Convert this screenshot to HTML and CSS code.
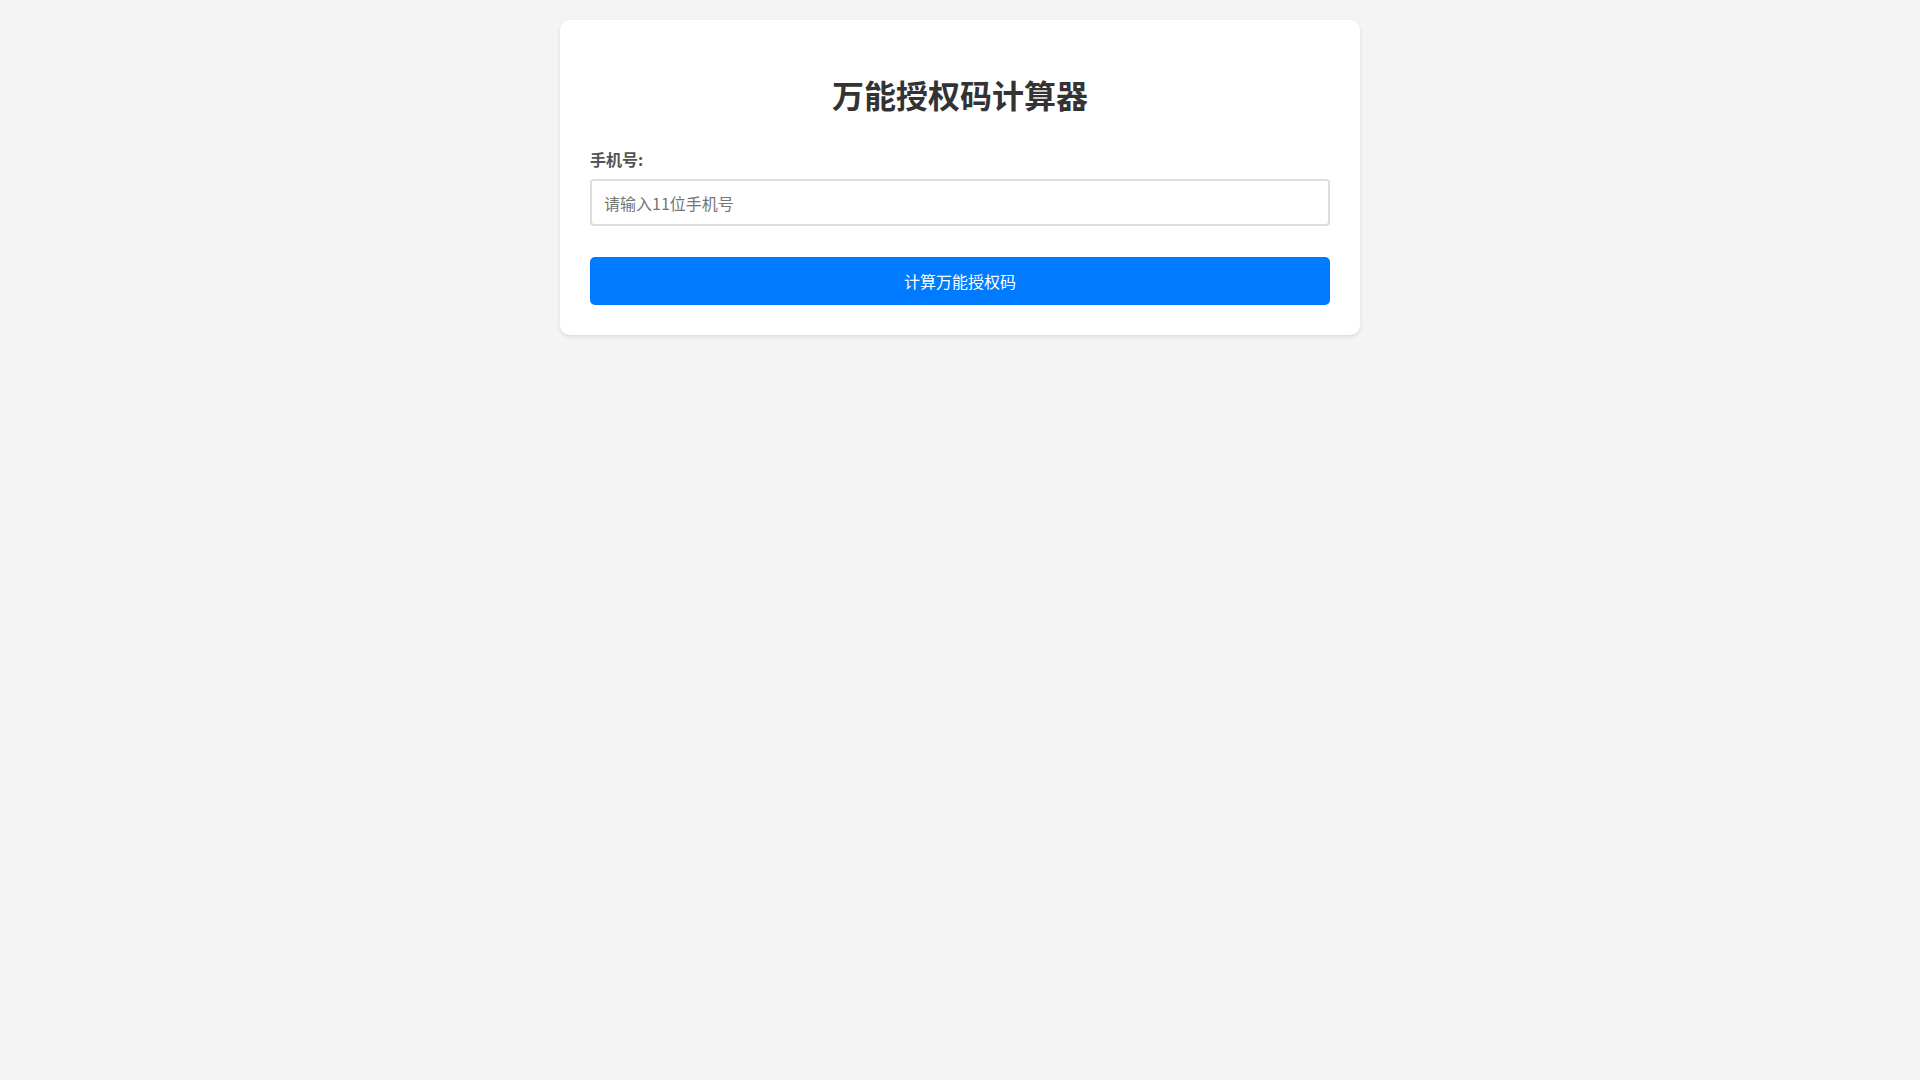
FILE: index.html
```html
<!DOCTYPE html>
<html lang="zh-CN">
<head>
<meta charset="utf-8">
<title>万能授权码计算器</title>
<link rel="stylesheet" href="styles.css">
</head>
<body>
<div class="container">
  <h1 class="title">万能授权码计算器</h1>
  <div class="form-group">
    <label class="label" for="phone">手机号:</label>
    <input class="input" id="phone" type="text" placeholder="请输入11位手机号">
  </div>
  <button class="btn" type="button">计算万能授权码</button>
</div>
</body>
</html>
```

FILE: styles.css
```css
* {
  box-sizing: border-box;
}

body {
  margin: 0;
  background: #f4f4f4;
  font-family: "Noto Sans CJK SC", "Noto Sans", sans-serif;
  color: #333;
}

.container {
  width: 800px;
  margin: 20px auto;
  background: #fff;
  padding: 30px;
  border-radius: 10px;
  box-shadow: 0 2px 4px rgba(0, 0, 0, 0.1);
}

.title {
  font-size: 32px;
  font-weight: bold;
  text-align: center;
  color: #333;
  margin: 21px 0 30px;
}

.form-group {
  margin-bottom: 31px;
}

.label {
  display: block;
  font-size: 16px;
  font-weight: bold;
  color: #555;
  margin-bottom: 8px;
}

.input {
  display: block;
  width: 100%;
  height: 47px;
  padding: 0 12px;
  font-size: 16px;
  font-family: inherit;
  border: 2px solid #ddd;
  border-radius: 4px;
  color: #333;
  outline: none;
}

.input::placeholder {
  color: #757575;
}

.btn {
  display: block;
  width: 100%;
  height: 48px;
  background: #007bff;
  color: #fff;
  border: none;
  border-radius: 5px;
  font-size: 16px;
  font-family: inherit;
  cursor: pointer;
}
```
